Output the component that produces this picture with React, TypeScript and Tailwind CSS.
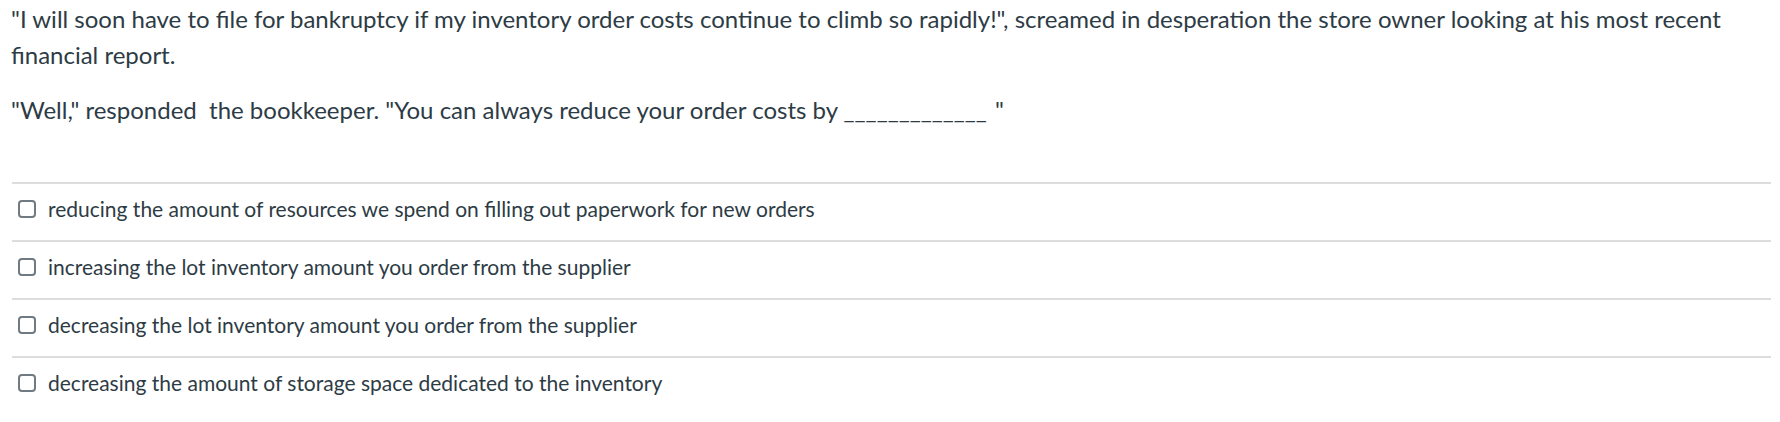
const options = [
  "reducing the amount of resources we spend on filling out paperwork for new orders",
  "increasing the lot inventory amount you order from the supplier",
  "decreasing the lot inventory amount you order from the supplier",
  "decreasing the amount of storage space dedicated to the inventory",
];

export default function App() {
  return (
    <div className="w-[1780px] h-[422px] bg-white text-[#2d3b45] font-['Lato',sans-serif] pl-[11px] pr-[9px]">
      <div className="text-[24px] leading-[36px]">
        <p className="pt-[1px]">
          "I will soon have to file for bankruptcy if my inventory order costs continue to climb so rapidly!", screamed in desperation the store owner looking at his most recent financial report.
        </p>
        <p className="mt-[19px]">
          "Well," responded&nbsp; the bookkeeper. "You can always reduce your order costs by _____________ <span className="ml-[2px]">"</span>
        </p>
      </div>

      <div className="mt-[54px] ml-[1px] text-[21px] leading-[36px]">
        {options.map((text) => (
          <label
            key={text}
            className="flex items-center h-[58px] border-t-2 border-[#dddddd] pl-[6px] pb-[6px]"
          >
            <span className="w-[18px] h-[18px] rounded-[4px] border-2 border-[#6f7a82] bg-white shrink-0" />
            <span className="ml-[12px]">{text}</span>
          </label>
        ))}
      </div>
    </div>
  );
}
